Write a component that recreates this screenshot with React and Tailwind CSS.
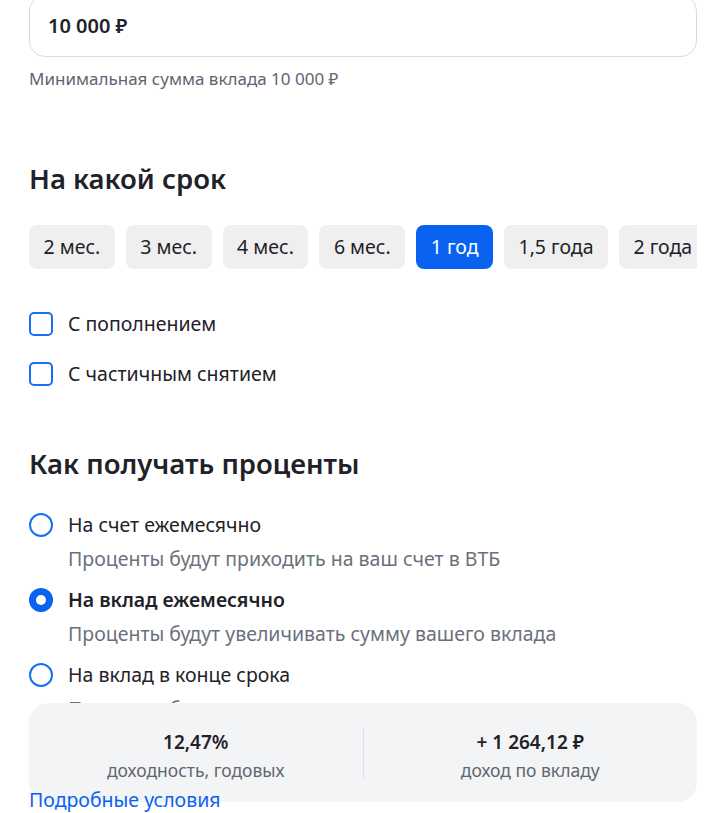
import React from 'react';

const terms = ['2 мес.', '3 мес.', '4 мес.', '6 мес.', '1 год', '1,5 года', '2 года'];

const options = [
  { label: 'На счет ежемесячно', hint: 'Проценты будут приходить на ваш счет в ВТБ' },
  { label: 'На вклад ежемесячно', hint: 'Проценты будут увеличивать сумму вашего вклада', active: true },
  { label: 'На вклад в конце срока', hint: 'Проценты будут начислены в конце срока' },
];

const Radio = ({ active }) =>
  active ? (
    <span className="flex size-6 shrink-0 items-center justify-center rounded-full bg-[#0a62f0]">
      <span className="size-[10px] rounded-full bg-white"></span>
    </span>
  ) : (
    <span className="size-6 shrink-0 rounded-full border-2 border-[#1a6ef5]"></span>
  );

export default function App() {
  return (
    <div
      className="relative h-[813px] w-[727px] overflow-hidden bg-white text-[#1f2229]"
      style={{ fontFamily: '"Noto Sans", "Open Sans", sans-serif' }}
    >
      <div className="-mt-[5px] flex flex-col px-[29px]">
        <div className="flex h-[62px] w-[668px] items-center rounded-[16px] border border-[#d9dbe0] px-[18px]">
          <span className="text-[20px] font-semibold">10 000 ₽</span>
        </div>
        <p className="mt-[12px] text-[17px] leading-[20px] text-[#5f6570]">Минимальная сумма вклада 10 000 ₽</p>

        <h2 className="mt-[73px] text-[27.5px] font-semibold leading-[34px]">На какой срок</h2>
        <div className="mt-[29px] flex w-[668px] gap-[11px] overflow-hidden">
          {terms.map((t) => (
            <button
              key={t}
              className={`flex h-[44px] shrink-0 items-center rounded-[8px] px-[14.5px] text-[19.5px] ${
                t === '1 год' ? 'bg-[#0a62f0] text-white' : 'bg-[#efefef] text-[#1f2229]'
              }`}
            >
              {t}
            </button>
          ))}
        </div>

        <div className="mt-[43px] flex flex-col gap-[26px]">
          {['С пополнением', 'С частичным снятием'].map((c) => (
            <label key={c} className="flex h-6 items-center gap-[15px] text-[19.5px] leading-[24px]">
              <span className="size-6 shrink-0 rounded-[5px] border-2 border-[#1a6ef5]"></span>
              {c}
            </label>
          ))}
        </div>

        <h2 className="mt-[61px] text-[27.5px] font-semibold leading-[34px]">Как получать проценты</h2>
        <div className="mt-[32px] flex flex-col gap-[17px]">
          {options.map((o) => (
            <div key={o.label} className="flex flex-col gap-[10px]">
              <div className="flex h-6 items-center gap-[15px]">
                <Radio active={o.active} />
                <span className={`text-[19.5px] leading-[24px] ${o.active ? 'font-semibold' : ''}`}>{o.label}</span>
              </div>
              <p className="pl-[39px] text-[19.5px] leading-[24px] text-[#6b717c]">{o.hint}</p>
            </div>
          ))}
        </div>

        <a className="relative z-10 mt-[67px] text-[19.5px] leading-[24px] text-[#0a62f0]">Подробные условия</a>
      </div>

      <div className="absolute left-[29px] top-[703px] flex h-[99px] w-[668px] items-center rounded-[20px] bg-[#f3f4f6]">
        <div className="flex flex-1 flex-col items-center gap-[5px] self-start pt-[27px]">
          <span className="text-[19px] font-semibold leading-[24px]">12,47%</span>
          <span className="text-[17.5px] leading-[22px] text-[#62666e]">доходность, годовых</span>
        </div>
        <div className="h-[50px] w-px bg-[#dcdee2]"></div>
        <div className="flex flex-1 flex-col items-center gap-[5px] self-start pt-[27px]">
          <span className="text-[19px] font-semibold leading-[24px]">+ 1 264,12 ₽</span>
          <span className="text-[17.5px] leading-[22px] text-[#62666e]">доход по вкладу</span>
        </div>
      </div>
    </div>
  );
}
